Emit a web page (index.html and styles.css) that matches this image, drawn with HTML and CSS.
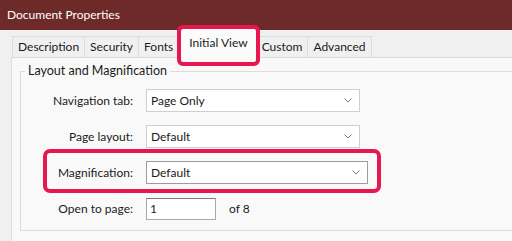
FILE: index.html
```
<!DOCTYPE html>
<html lang="en">
<head>
  <meta charset="UTF-8">
  <meta name="viewport" content="width=device-width, initial-scale=1.0">
  <title>Document Properties</title>
  <link rel="stylesheet" href="styles.css">
</head>
<body>
  <div class="titlebar">Document Properties</div>
  <div class="dialog">
    <div class="tabs">
      <div class="tab">Description</div>
      <div class="tab">Security</div>
      <div class="tab">Fonts</div>
      <div class="tab active">Initial View</div>
      <div class="tab">Custom</div>
      <div class="tab">Advanced</div>
    </div>
    <div class="panel">
      <fieldset class="group">
        <legend>Layout and Magnification</legend>
        <div class="rows">
          <div class="row">
            <label>Navigation tab:</label>
            <div class="select">Page Only
              <svg width="8" height="5" viewBox="0 0 8 5"><polyline points="0.5,0.5 4,4 7.5,0.5" fill="none" stroke="#777" stroke-width="1"/></svg>
            </div>
          </div>
          <div class="row">
            <label>Page layout:</label>
            <div class="select">Default
              <svg width="8" height="5" viewBox="0 0 8 5"><polyline points="0.5,0.5 4,4 7.5,0.5" fill="none" stroke="#777" stroke-width="1"/></svg>
            </div>
          </div>
          <div class="row highlight">
            <label>Magnification:</label>
            <div class="select wide">Default
              <svg width="8" height="5" viewBox="0 0 8 5"><polyline points="0.5,0.5 4,4 7.5,0.5" fill="none" stroke="#777" stroke-width="1"/></svg>
            </div>
          </div>
          <div class="row">
            <label>Open to page:</label>
            <div class="input">1</div>
            <span class="of">of 8</span>
          </div>
        </div>
      </fieldset>
    </div>
  </div>
</body>
</html>
```

FILE: styles.css
```
body {
  margin: 0;
  font-family: 'Lato', sans-serif;
  color: #1b1b1b;
  background: #f0f0f0;
  overflow: hidden;
  height: 241px;
}

.titlebar {
  height: 30px;
  line-height: 30px;
  padding-left: 7px;
  background: #6e2a28;
  color: #fff;
  font-size: 12px;
}

.tabs {
  display: flex;
  align-items: flex-end;
  height: 28px;
  margin-top: -1px;
  padding-left: 12px;
}

.tab {
  position: relative;
  height: 20px;
  line-height: 20px;
  padding: 0 5px;
  font-size: 12px;
  background: #f0f0f0;
  border: 1px solid #dcdcdc;
  border-bottom: none;
  margin-right: -1px;
}

.tab.active {
  height: 29px;
  line-height: 28px;
  padding: 0 8px 0 10px;
  margin-bottom: -1px;
  background: #fbfbfb;
  z-index: 2;
}

.tab.active::after {
  content: '';
  position: absolute;
  top: -4px;
  left: -2px;
  right: -4px;
  bottom: -8px;
  border: 4px solid #e8174f;
  border-radius: 6px;
}

.panel {
  box-sizing: border-box;
  height: 184px;
  margin-left: 11px;
  padding: 4px 0 0 8px;
  background: #f9f9f9;
  border: 1px solid #dcdcdc;
  border-right: none;
  border-bottom: none;
}

.group {
  margin: 0;
  padding: 9px 0 10px 0;
  border: 1px solid #dcdcdc;
  border-right: none;
}

.group legend {
  margin-left: 4px;
  padding: 0 3px;
  font-size: 12.5px;
  line-height: 18px;
}

.rows {
  display: flex;
  flex-direction: column;
  gap: 13px;
}

.row {
  display: flex;
  align-items: center;
  height: 23px;
  font-size: 12px;
}

.row label {
  width: 112px;
  margin-right: 13px;
  text-align: right;
}

.row.highlight {
  position: relative;
  width: fit-content;
}

.row.highlight::after {
  content: '';
  position: absolute;
  top: -12px;
  bottom: -9px;
  left: 22px;
  right: -13px;
  border: 4px solid #e8174f;
  border-radius: 7px;
}

.select {
  display: flex;
  align-items: center;
  justify-content: space-between;
  box-sizing: border-box;
  width: 214px;
  height: 23px;
  padding: 0 7px 0 4px;
  background: #fff;
  border: 1px solid #cfcfcf;
}

.select.wide {
  width: 222px;
  border-color: #9c9c9c;
}

.input {
  box-sizing: border-box;
  width: 70px;
  height: 22px;
  line-height: 20px;
  padding-left: 3px;
  background: #fff;
  border: 1px solid #a8a8a8;
  border-top-color: #7a7a7a;
}

.of {
  margin-left: 13px;
}
```
